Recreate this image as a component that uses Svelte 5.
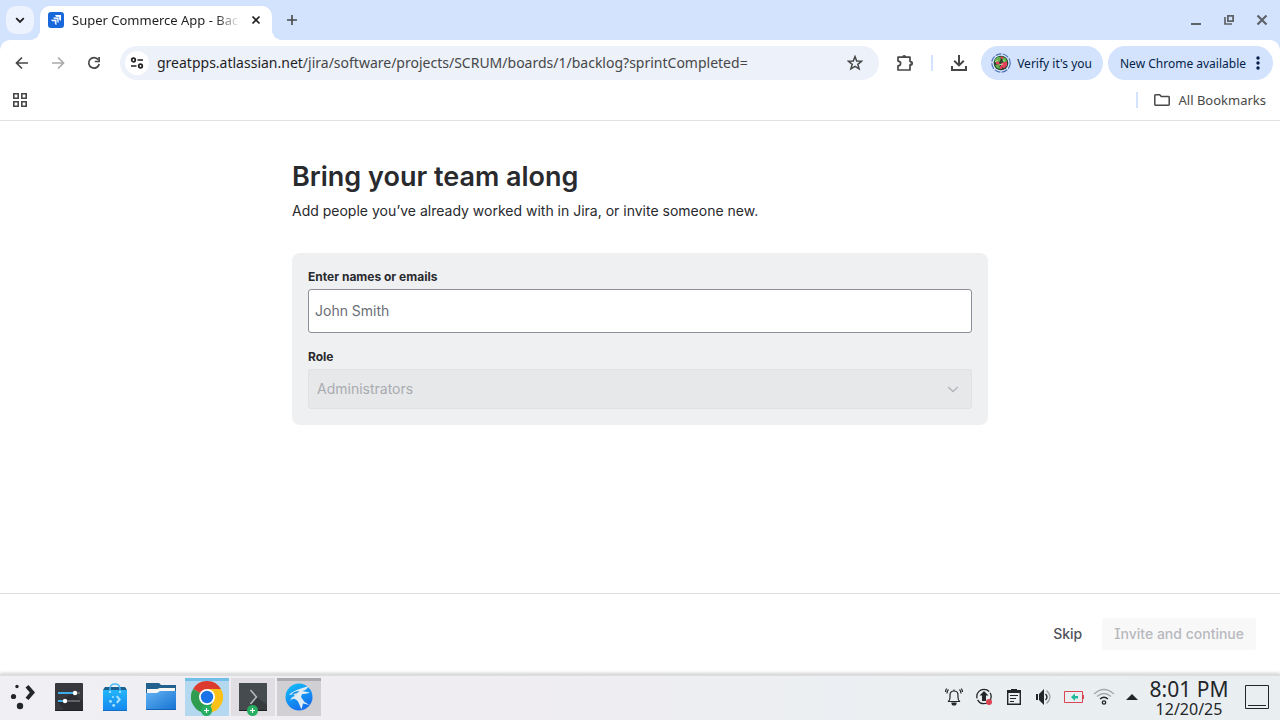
<script lang="ts">
  let invitees = $state('');
  let role = $state('Administrators');
  const ready = $derived(invitees.trim().length > 0);
</script>

<div class="screen">
  <header class="browser">
    <div class="tabstrip">
      <button class="tab-search" aria-label="Search tabs">
        <svg width="12" height="12" viewBox="0 0 12 12"><path d="M2.200 4.200 6 8 9.800 4.200" fill="none" stroke="#1f1f1f" stroke-width="1.800" /></svg>
      </button>
      <div class="tab">
        <svg class="favicon" width="16" height="16" viewBox="0 0 16 16">
          <rect width="16" height="16" rx="3" fill="#1868db" />
          <path d="M7.200 3H13v5.800c-1.200 0-2-.8-2-2V5.100H9.200c-1.200 0-2-.9-2-2.100z" fill="#fff" />
          <path d="M5.100 5.200h5.700v5.700c-1.200 0-1.900-.8-1.900-1.900V7.200H7c-1.200 0-1.900-.9-1.900-2z" fill="#fff" stroke="#1868db" stroke-width=".4" />
          <path d="M3 7.400h5.700v5.700c-1.200 0-1.900-.8-1.900-1.900V9.400H5c-1.200 0-2-.9-2-2z" fill="#fff" stroke="#1868db" stroke-width=".4" />
        </svg>
        <span class="tab-title">Super Commerce App - Backlog</span>
        <button class="tab-close" aria-label="Close tab">
          <svg width="10" height="10" viewBox="0 0 10 10"><path d="M1.500 1.500l7 7M8.500 1.500l-7 7" stroke="#1f1f1f" stroke-width="1.700" /></svg>
        </button>
      </div>
      <button class="new-tab" aria-label="New tab">
        <svg width="12" height="12" viewBox="0 0 12 12"><path d="M6 1v10M1 6h10" stroke="#474747" stroke-width="1.600" /></svg>
      </button>
      <div class="window-controls">
        <button aria-label="Minimize"><svg width="12" height="12" viewBox="0 0 12 12"><path d="M1 10h10" stroke="#5f6368" stroke-width="2" /></svg></button>
        <button aria-label="Restore">
          <svg width="12" height="12" viewBox="0 0 12 12" fill="none" stroke="#5f6368"><path d="M4.900 1.900h5.200v5.200H4.900z" stroke-width="1.800" /><path d="M2 3v7h7" stroke-width="1.700" /></svg>
        </button>
        <button aria-label="Close window"><svg width="12" height="12" viewBox="0 0 12 12"><path d="M1.500 1.500l9 9M10.500 1.500l-9 9" stroke="#5f6368" stroke-width="2.200" /></svg></button>
      </div>
    </div>

    <div class="toolbar-wrap">
      <div class="toolbar">
        <nav class="history" aria-label="History">
          <button aria-label="Back"><svg width="14" height="14" viewBox="0 0 14 14"><path d="M13 7H2M7 1.500 1.500 7 7 12.500" fill="none" stroke="#474747" stroke-width="1.700" /></svg></button>
          <button aria-label="Forward"><svg width="14" height="14" viewBox="0 0 14 14"><path d="M1 7h11M7 1.500 12.500 7 7 12.500" fill="none" stroke="#aaa" stroke-width="1.700" /></svg></button>
          <button aria-label="Reload">
            <svg width="14" height="14" viewBox="0 0 14 14"><path d="M11.300 3.700A5.300 5.300 0 1 0 12.200 8" fill="none" stroke="#474747" stroke-width="1.700" /><path d="M12.100 1v4.500H7.800" fill="none" stroke="#474747" stroke-width="1.700" /></svg>
          </button>
        </nav>
        <div class="omnibox">
          <button class="site-info" aria-label="View site information">
            <svg width="14" height="14" viewBox="0 0 14 14" fill="none" stroke="#1f1f1f" stroke-width="1.700"><circle cx="3.500" cy="4" r="1.800" /><path d="M7.500 4H13M1 10h5.500" /><circle cx="10.500" cy="10" r="1.800" /></svg>
          </button>
          <p class="url"><span>greatpps.atlassian.net</span>/jira/software/projects/SCRUM/boards/1/backlog?sprintCompleted=</p>
          <button class="star" aria-label="Bookmark this tab">
            <svg width="16" height="16" viewBox="0 0 16 16"><path d="M8 1.600l1.700 4.500 4.800.2-3.700 3 1.300 4.600L8 11.300l-4.100 2.600 1.300-4.600-3.700-3 4.800-.2z" fill="none" stroke="#474747" stroke-width="1.500" /></svg>
          </button>
        </div>
        <button class="tool" aria-label="Extensions">
          <svg width="18" height="18" viewBox="0 0 18 18"><path d="M2 3.200h12v4.300h.5a1.700 1.700 0 0 1 0 3.400H14V16H2v-4.200c3.500-.3 3.500-4.500 0-4.700z" fill="none" stroke="#474747" stroke-width="1.700" stroke-linejoin="round" /><path d="M6.300 3a1.900 1.900 0 0 1 3.800 0zM14.500 7.500a1.900 1.900 0 0 1 0 3.500z" fill="#474747" /></svg>
        </button>
        <i class="divider"></i>
        <button class="tool" aria-label="Downloads">
          <svg width="18" height="18" viewBox="0 0 18 18" fill="none" stroke="#474747" stroke-width="2"><path d="M9 1v10M4.200 6.700 9 11.400l4.800-4.700M2 12v4h14v-4" /></svg>
        </button>
        <button class="pill profile">
          <svg width="20" height="20" viewBox="0 0 20 20">
            <circle cx="10" cy="10" r="9.200" fill="none" stroke="#4f73b5" stroke-width="1.200" stroke-dasharray="6 1.500" />
            <circle cx="10" cy="10" r="7.300" fill="#27452b" />
            <path d="M3.500 7 7 3.500l3 1-1 4-4 1.500zM11 3.500l4 2 1 3-4 1.500zM4 12l4-1 1 5-3-1z" fill="#62b14b" />
            <path d="M9.500 3.500l3 .5-1 2-2-.5zM5 8l3 1 1 3-4-1zM10 10l6-1.500 0 4-3 3-3-2zM9 13l2 1 0 2-2 0z" fill="#e5415d" />
            <path d="M4 9l3-2M8 12l4-1M12 7l2 1" stroke="#b9e2a0" />
          </svg>
          Verify it's you
        </button>
        <button class="pill update">
          New Chrome available
          <svg width="4" height="16" viewBox="0 0 4 16" fill="#041e49"><circle cx="2" cy="3" r="1.700" /><circle cx="2" cy="8" r="1.700" /><circle cx="2" cy="13" r="1.700" /></svg>
        </button>
      </div>

      <div class="bookmarks">
        <button aria-label="Apps">
          <svg width="14" height="14" viewBox="0 0 14 14" fill="none" stroke="#474747" stroke-width="1.600"><path d="M.8.8h4.400v4.400H.8zM8.800.8h4.400v4.400H8.800zM.8 8.800h4.400v4.400H.8zM8.800 8.800h4.400v4.400H8.800z" /></svg>
        </button>
        <i class="divider"></i>
        <button class="all-bookmarks">
          <svg width="16" height="12" viewBox="0 0 16 12"><path d="M.8 1.500q0-.7.700-.7h4.200l1.600 1.700h7.200q.7 0 .7.700v7.300q0 .7-.7.700h-13q-.7 0-.7-.7z" fill="none" stroke="#474747" stroke-width="1.500" /></svg>
          All Bookmarks
        </button>
      </div>
    </div>
  </header>

  <form class="page" onsubmit={(event) => event.preventDefault()}>
    <main>
      <h1>Bring your team along</h1>
      <p class="lead">Add people you’ve already worked with in Jira, or invite someone new.</p>
      <section class="card">
        <label for="invitees">Enter names or emails</label>
        <input id="invitees" type="text" placeholder="John Smith" bind:value={invitees} />
        <label for="role">Role</label>
        <div class="select">
          <select id="role" bind:value={role} disabled={!ready}>
            <option>Administrators</option>
            <option>Member</option>
            <option>Viewer</option>
          </select>
          <svg width="12" height="12" viewBox="0 0 12 12"><path d="M1.200 4 6 8.500 10.800 4" fill="none" stroke="#b3b5ba" stroke-width="1.300" /></svg>
        </div>
      </section>
    </main>
    <footer>
      <button type="button" class="skip">Skip</button>
      <button type="submit" class="invite" disabled={!ready}>Invite and continue</button>
    </footer>
  </form>

  <div class="taskbar">
    <nav class="tasks" aria-label="Taskbar">
      <button aria-label="Application launcher">
        <svg width="32" height="32" viewBox="0 0 32 32" fill="#232629"><circle cx="10" cy="5.500" r="1.700" /><circle cx="6.500" cy="15.500" r="2.600" /><circle cx="13" cy="25" r="3.200" /><path d="M18.500 6.500l3-2.500L28 11.500l-6.500 7.500-3-2.300 4.300-5.200z" /></svg>
      </button>
      <button aria-label="System settings">
        <svg width="32" height="32" viewBox="0 0 32 32">
          <rect x="2" y="2" width="28" height="28" rx="1" fill="#37393f" /><path d="M5 21l15-9 10 9v9H12z" fill="#2b2d32" /><path d="M2 29h28v1H2z" fill="#1d1f22" />
          <path d="M5 12h17M5 20h7" stroke="#3daee9" stroke-width="2" /><path d="M22 12h5M12 20h15" stroke="#606469" stroke-width="2" />
          <circle cx="22" cy="12" r="2.200" fill="#fff" /><circle cx="12" cy="20" r="2.200" fill="#fff" />
        </svg>
      </button>
      <button aria-label="Discover">
        <svg width="32" height="32" viewBox="0 0 32 32">
          <defs><linearGradient id="bag" x2="0" y2="1"><stop stop-color="#22b5fa" /><stop offset="1" stop-color="#1487ee" /></linearGradient></defs>
          <path d="M6 6h20l2 3H4z" fill="#1c608f" /><path d="M4 9h24v21H4z" fill="url(#bag)" /><path d="M4 29h24v1H4z" fill="#116cc4" />
          <path d="M11 11V8q0-5 5-5t5 5v3" fill="none" stroke="#47bdf7" stroke-width="1.400" />
          <circle cx="11" cy="11" r="1" fill="#c8edff" /><circle cx="21" cy="11" r="1" fill="#c8edff" />
          <g fill="#a9e3ff"><circle cx="14" cy="16" r="1" /><circle cx="11.500" cy="20.500" r="1.400" /><circle cx="14.700" cy="24.500" r="1.400" /><path d="M17 15.500l1.500-1 3.500 4-3.500 4-1.500-1.200 2.200-2.800z" /></g>
        </svg>
      </button>
      <button aria-label="Files">
        <svg width="32" height="32" viewBox="0 0 32 32">
          <defs><linearGradient id="folder" x2="1" y2="1"><stop stop-color="#64b2f1" /><stop offset="1" stop-color="#1573d4" /></linearGradient></defs>
          <path d="M1 2h13l2 2h15v8H1z" fill="#20618f" /><path d="M2 8h10l3-1h15v6H2z" fill="#f6f6f5" /><path d="M1 12h11l3-2h16v19H1z" fill="url(#folder)" /><path d="M1 28h30v1H1z" fill="#1462b3" />
        </svg>
      </button>
      <button class="task active" aria-label="Google Chrome">
        <svg width="32" height="32" viewBox="0 0 32 32">
          <path d="M16 16 2.140 8A16 16 0 0 1 29.860 8z" fill="#dd3b2d" /><path d="M2.140 8A16 16 0 0 0 16 32l6.900-12L16 16z" fill="#2f9c50" /><path d="M16 8h13.860A16 16 0 0 1 16 32l6.930-12z" fill="#fbc116" />
          <circle cx="16" cy="16" r="8" fill="#fff" /><circle cx="16" cy="16" r="6.200" fill="#1a73e8" />
        </svg>
        <span class="badge"><svg width="11" height="11" viewBox="0 0 11 11"><path d="M5.500 3v5M3 5.500h5" stroke="#fff" stroke-width="1.200" /></svg></span>
      </button>
      <button class="task open" aria-label="Terminal">
        <svg width="32" height="32" viewBox="0 0 32 32"><rect x="2" y="2" width="28" height="28" fill="#454b4e" /><path d="M13 23l7-7 10 8v6H16z" fill="#363b3e" /><path d="M2 29h28v1H2z" fill="#202325" /><path d="M13.500 9l6 7-6 7" fill="none" stroke="#b9bec0" stroke-width="1.500" /></svg>
        <span class="badge"><svg width="11" height="11" viewBox="0 0 11 11"><path d="M5.500 3v5M3 5.500h5" stroke="#fff" stroke-width="1.200" /></svg></span>
      </button>
      <button class="task attention" aria-label="Text editor">
        <svg width="32" height="32" viewBox="0 0 32 32">
          <defs><linearGradient id="orb" x2=".5" y2="1"><stop stop-color="#12c2fb" /><stop offset="1" stop-color="#1470ed" /></linearGradient></defs>
          <circle cx="16" cy="16" r="13.500" fill="url(#orb)" />
          <path d="M26 5c-2 3-4 4.500-7 5l8 1.500c-3 1-6 1.500-8 1.500l-1 3 3.500 5 5 3-6.500-1.500-1.500 6-3-7c-1-2-2-3-4-3.500-2-.5-3 .3-4 2 0-3 1.500-4.500 4-4.800L11 13l-5 1c2-2.500 5-4 9-5.500C19 7 23 6 26 5z" fill="#e0ecf4" />
          <path d="M8.500 13c2-2 5-3 8-3l-3 2.500z" fill="#158fdb" />
        </svg>
      </button>
    </nav>

    <div class="tray">
      <button aria-label="Notifications"><svg width="20" height="20" viewBox="0 0 20 20" fill="none" stroke="#232629" stroke-width="1.200"><path d="M4 14.500q2-1 2-4V8q0-4 4-4t4 4v2.500q0 3 2 4zM10 2.500V4M4.500 2.500Q3 4 3 6.500M2.700 1.500Q1.500 3 1.500 5M15.500 2.500Q17 4 17 6.500M17.300 1.500Q18.500 3 18.500 5" /><path d="M8 16h4q0 2-2 2t-2-2z" fill="#232629" /></svg></button>
      <button aria-label="Updates"><svg width="20" height="20" viewBox="0 0 20 20"><circle cx="10" cy="9.500" r="7.200" fill="none" stroke="#232629" stroke-width="1.300" stroke-dasharray="19 1.500" /><path d="M10 4l4.500 4.500H12V14H8V8.500H5.500z" fill="#232629" /><circle cx="15" cy="15" r="3" fill="#da4453" /></svg></button>
      <button aria-label="Clipboard"><svg width="20" height="20" viewBox="0 0 20 20" fill="none" stroke="#232629"><path d="M3.700 4v13.300h12.600V4" stroke-width="1.400" /><path d="M3 3h4V2h6v1h4v3H3z" fill="#232629" stroke="none" /><path d="M6 8.500h8M6 11.500h6M6 14.500h4" /></svg></button>
      <button aria-label="Volume"><svg width="20" height="20" viewBox="0 0 20 20"><path d="M2 7h2v6H2zM5 7l5-5v16l-5-5z" fill="#232629" /><path d="M11.500 7q3 3 0 6" fill="none" stroke="#232629" stroke-width="1.400" /><path d="M12.500 3.500q7 6.500 0 13" fill="none" stroke="#9b9fa1" stroke-width="1.300" /></svg></button>
      <button aria-label="Battery"><svg width="20" height="20" viewBox="0 0 20 20"><path d="M.5 4.500h18v11H.5z" fill="none" stroke="#da4453" /><path d="M19 8h1v4h-1z" fill="#da4453" /><path d="M7 10l4-3.500V9h3v2.500h-3V14z" fill="#22b99a" /></svg></button>
      <button aria-label="Network"><svg width="22" height="20" viewBox="0 0 22 20" fill="none" stroke-width="1.300"><g stroke="#a4a9ab"><path d="M1 7q10-9 20 0M4 9.500q7-6 14 0" /></g><path d="M7 12q4-3.500 8 0" stroke="#232629" /><circle cx="11" cy="15.500" r="1.700" stroke="#232629" /></svg></button>
      <button class="more" aria-label="Show hidden icons"><svg width="12" height="6" viewBox="0 0 12 6"><path d="M0 6l6-6 6 6z" fill="#232629" /></svg></button>
    </div>
    <div class="clock"><time>8:01 PM</time><span>12/20/25</span></div>
    <button class="peek" aria-label="Show desktop"><svg width="24" height="24" viewBox="0 0 24 24" fill="none" stroke="#232629"><path d="M.5.5h23v23H.5zM3 20.500h18" /></svg></button>
  </div>
</div>

<style>
  :global(body) { margin: 0; background: #fff; }
  .screen {
    min-height: 100vh;
    display: flex;
    flex-direction: column;
    font-family: "Noto Sans", sans-serif;
  }
  .screen * { box-sizing: border-box; }
  button {
    display: flex;
    align-items: center;
    justify-content: center;
    padding: 0;
    border: 0;
    background: transparent;
    color: inherit;
    font: inherit;
    white-space: nowrap;
    flex-shrink: 0;
  }
  svg { display: block; flex-shrink: 0; }

  .browser { background: #d3e3fd; border-bottom: 1px solid #dfe1e5; }
  .tabstrip { height: 40px; display: flex; align-items: flex-end; padding: 0 12px 0 6px; }
  .tab-search { width: 28px; height: 28px; margin-bottom: 6px; border-radius: 10px; background: #ecf2fe; }
  .tab {
    position: relative;
    width: 232px;
    height: 34px;
    margin-left: 6px;
    padding: 0 8px 6px;
    display: flex;
    align-items: center;
    border-radius: 10px 10px 0 0;
    background: #fff;
  }
  /* concave feet that join the tab to the toolbar */
  .tab::before, .tab::after { content: ""; position: absolute; bottom: 0; width: 10px; height: 10px; }
  .tab::before { left: -10px; background: radial-gradient(circle at 0 0, transparent 10px, #fff 10px); }
  .tab::after { right: -10px; background: radial-gradient(circle at 100% 0, transparent 10px, #fff 10px); }
  .tab-title {
    flex: 1;
    min-width: 0;
    margin-left: 8px;
    overflow: hidden;
    color: #1f1f1f;
    font-size: 13px;
    line-height: 20px;
    white-space: nowrap;
    mask-image: linear-gradient(to right, #000 calc(100% - 24px), transparent);
  }
  .tab-close { width: 16px; height: 16px; margin-left: 8px; }
  .new-tab { width: 28px; height: 28px; margin: 0 0 6px 6px; }
  .window-controls { display: flex; gap: 21px; margin: 0 0 14px auto; }

  .toolbar-wrap { background: #fff; border-radius: 10px 10px 0 0; }
  .toolbar { height: 46px; display: flex; align-items: center; padding: 0 7px 0 8px; }
  .history { display: flex; gap: 8px; }
  .history button { width: 28px; height: 28px; }
  .omnibox {
    flex: 1;
    min-width: 0;
    height: 34px;
    margin-left: 12px;
    padding: 0 16px 0 5px;
    display: flex;
    align-items: center;
    border-radius: 17px;
    background: #ecf1fa;
  }
  .site-info { width: 24px; height: 24px; border-radius: 50%; background: #fff; }
  .url { flex: 1; min-width: 0; margin: 0 0 0 8px; overflow: hidden; color: #474747; font-size: 14px; line-height: 22px; white-space: nowrap; }
  .url span { color: #1f1f1f; }
  .tool { width: 28px; height: 28px; margin-left: 12px; }
  .divider { width: 2px; height: 16px; background: #d3e3fd; }
  .toolbar .divider { margin-left: 12px; }
  .pill { height: 34px; padding: 0 12px; border-radius: 17px; background: #d3e3fd; color: #041e49; font-size: 12px; }
  .profile { gap: 6px; margin-left: 8px; padding: 0 11px 0 10px; }
  .update { gap: 10px; margin-left: 5px; padding-right: 13px; }
  .bookmarks { height: 34px; display: flex; align-items: center; justify-content: flex-end; padding: 0 14px 6px 13px; }
  .bookmarks button:first-child { margin-right: auto; }
  .all-bookmarks { gap: 8px; margin-left: 16px; color: #474747; font-size: 13px; }

  .page {
    flex: 1;
    display: flex;
    flex-direction: column;
    background: #fff;
    color: #292a2e;
    font: 14px/20px Inter, sans-serif;
  }
  main { flex: 1; width: 100%; max-width: 728px; margin: 0 auto; padding: 40px 16px; }
  h1 { margin: 0; font-size: 27px; line-height: 32px; font-weight: 600; }
  .lead { margin: 8px 0 32px; }
  .card { display: flex; flex-direction: column; padding: 16px; border-radius: 8px; background: #eff0f2; }
  .card label { margin-bottom: 4px; font-size: 12px; line-height: 16px; font-weight: 650; }
  .card input {
    height: 44px;
    margin-bottom: 16px;
    padding: 0 6px 2px;
    border: 1px solid #8c8f97;
    border-radius: 3px;
    background: #fff;
    color: inherit;
    font: inherit;
  }
  .card input::placeholder { color: #6b6e76; opacity: 1; }
  .select { position: relative; }
  .select svg { position: absolute; right: 13px; top: 14px; pointer-events: none; }
  select {
    display: block;
    width: 100%;
    height: 40px;
    padding: 0 8px;
    appearance: none;
    border: 1px solid #e1e2e4;
    border-radius: 3px;
    background: #e7e8ea;
    color: #292a2e;
    font: inherit;
  }
  select:disabled { color: #a9abb0; opacity: 1; }
  footer { display: flex; justify-content: flex-end; gap: 8px; padding: 24px; border-top: 1px solid #dddee1; }
  footer button { height: 32px; padding: 0 12px; border-radius: 3px; color: #505258; font-weight: 500; }
  .invite { background: #f8f8f8; font-feature-settings: "cv08"; }
  .invite:disabled { color: #b7b9be; }

  .taskbar {
    height: 46px;
    display: flex;
    align-items: center;
    padding: 0 11px 2px 0;
    border-top: 2px solid #dcddde;
    background: linear-gradient(to right, #efeff4, #f0edf2 35%, #ebeff2 70%, #e9eef1);
    color: #232629;
    box-shadow: 0 -1px 3px #00000030;
  }
  .tasks { display: flex; gap: 2px; margin-left: 1px; }
  .tasks button { position: relative; width: 44px; height: 38px; }
  .tasks .task { border-top: 3px solid; padding-bottom: 3px; }
  .tasks .active { border-color: #72bfe8; background: #b3d8ef; }
  .tasks .open { border-color: #e0dee2; background: #e0dee2; }
  .tasks .attention { border-color: #acabaf; background: #d0cfd3; }
  .badge {
    position: absolute;
    left: 16px;
    bottom: 0;
    width: 11px;
    height: 11px;
    border-radius: 50%;
    background: #27ae60;
  }
  .tray { display: flex; align-items: center; margin-left: auto; }
  .tray button { width: 30px; height: 30px; }
  .tray .more { width: 26px; }
  .clock { display: flex; flex-direction: column; align-items: center; width: 80px; margin-left: 4px; padding-top: 3px; }
  .clock time { font-size: 21px; line-height: 21px; white-space: nowrap; }
  .clock span { font-size: 16px; line-height: 19px; }
  .peek { margin-left: 16px; }
</style>
